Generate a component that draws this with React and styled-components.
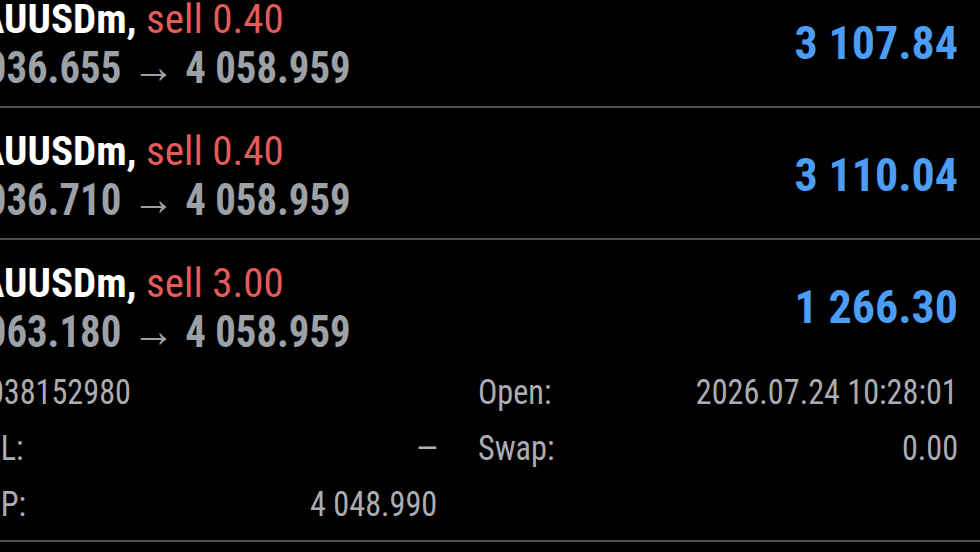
import React from "react";
import styled, { createGlobalStyle } from "styled-components";

const Global = createGlobalStyle`
  html, body { margin: 0; padding: 0; background: #000; overflow: hidden; }
  body { font-family: "Roboto Condensed", Roboto, "Liberation Sans", sans-serif; }
`;

const Viewport = styled.div`
  width: 980px;
  height: 552px;
  overflow: hidden;
  background: #000;
`;

const List = styled.div`
  width: 1023px;
  margin-left: -43px;
  margin-top: -24px;
  display: flex;
  flex-direction: column;
`;

const Row = styled.div`
  padding: 19px 22px ${(p) => (p.$expanded ? "7px" : "15px")} 0;
  border-bottom: 2px solid #4d4d52;
  display: flex;
  flex-direction: column;
`;

const Header = styled.div`
  display: grid;
  grid-template-columns: 1fr auto;
  align-items: center;
`;

const Info = styled.div`
  display: flex;
  flex-direction: column;
  white-space: nowrap;
`;

const Title = styled.div`
  font-size: 41px;
  line-height: 48px;
  height: 48px;
  font-weight: 700;
  color: #ffffff;
`;

const Side = styled.span`
  font-weight: 400;
  color: #e35b5b;
`;

const Prices = styled.div`
  margin-left: -6px;
  font-size: 45px;
  line-height: 48px;
  height: 48px;
  font-weight: 700;
  color: #9ca0a7;
  transform: scaleX(0.906);
  transform-origin: 51px center;
`;

const Arrow = styled.span`
  font-weight: 400;
  font-size: 47px;
  line-height: 1;
  margin: 0 1px 0 1px;
`;

const Profit = styled.div`
  font-size: 46px;
  line-height: 48px;
  font-weight: 700;
  color: #4b9df5;
  white-space: nowrap;
`;

const Details = styled.div`
  margin-top: 10px;
  display: grid;
  grid-template-columns: 1fr 1fr;
  column-gap: 40px;
`;

const Cell = styled.div`
  display: flex;
  justify-content: space-between;
  padding-left: ${(p) => (p.$indent ? "15px" : "0")};
  font-size: 35px;
  line-height: 56px;
  height: 56px;
  color: #acadb2;
  white-space: nowrap;
`;

const Narrow = styled.span`
  display: inline-block;
  transform: scaleX(0.92);
  transform-origin: ${(p) => p.$origin || "left"} center;
`;

const trades = [
  { open: "4 036.655", lot: "0.40", profit: "3 107.84" },
  { open: "4 036.710", lot: "0.40", profit: "3 110.04" },
  {
    open: "4 063.180",
    lot: "3.00",
    profit: "1 266.30",
    details: [
      ["5038152980", ""],
      ["Open:", "2026.07.24 10:28:01"],
      ["S/L:", "\u2014"],
      ["Swap:", "0.00"],
      ["T/P:", "4 048.990"],
      ["", ""],
    ],
  },
];

export default function App() {
  return (
    <Viewport>
      <Global />
      <List>
        {trades.map((t, i) => (
          <Row key={i} $expanded={!!t.details}>
            <Header>
              <Info>
                <Title>
                  XAUUSDm, <Side>sell {t.lot}</Side>
                </Title>
                <Prices>
                  {t.open}
                  <Arrow> → </Arrow>4 058.959
                </Prices>
              </Info>
              <Profit>{t.profit}</Profit>
            </Header>
            {t.details && (
              <Details>
                {t.details.map(([k, v], j) => (
                  <Cell key={j} $indent={j % 2 === 0}>
                    <Narrow $origin="left">{k}</Narrow>
                    <Narrow $origin="right">{v}</Narrow>
                  </Cell>
                ))}
              </Details>
            )}
          </Row>
        ))}
      </List>
    </Viewport>
  );
}
